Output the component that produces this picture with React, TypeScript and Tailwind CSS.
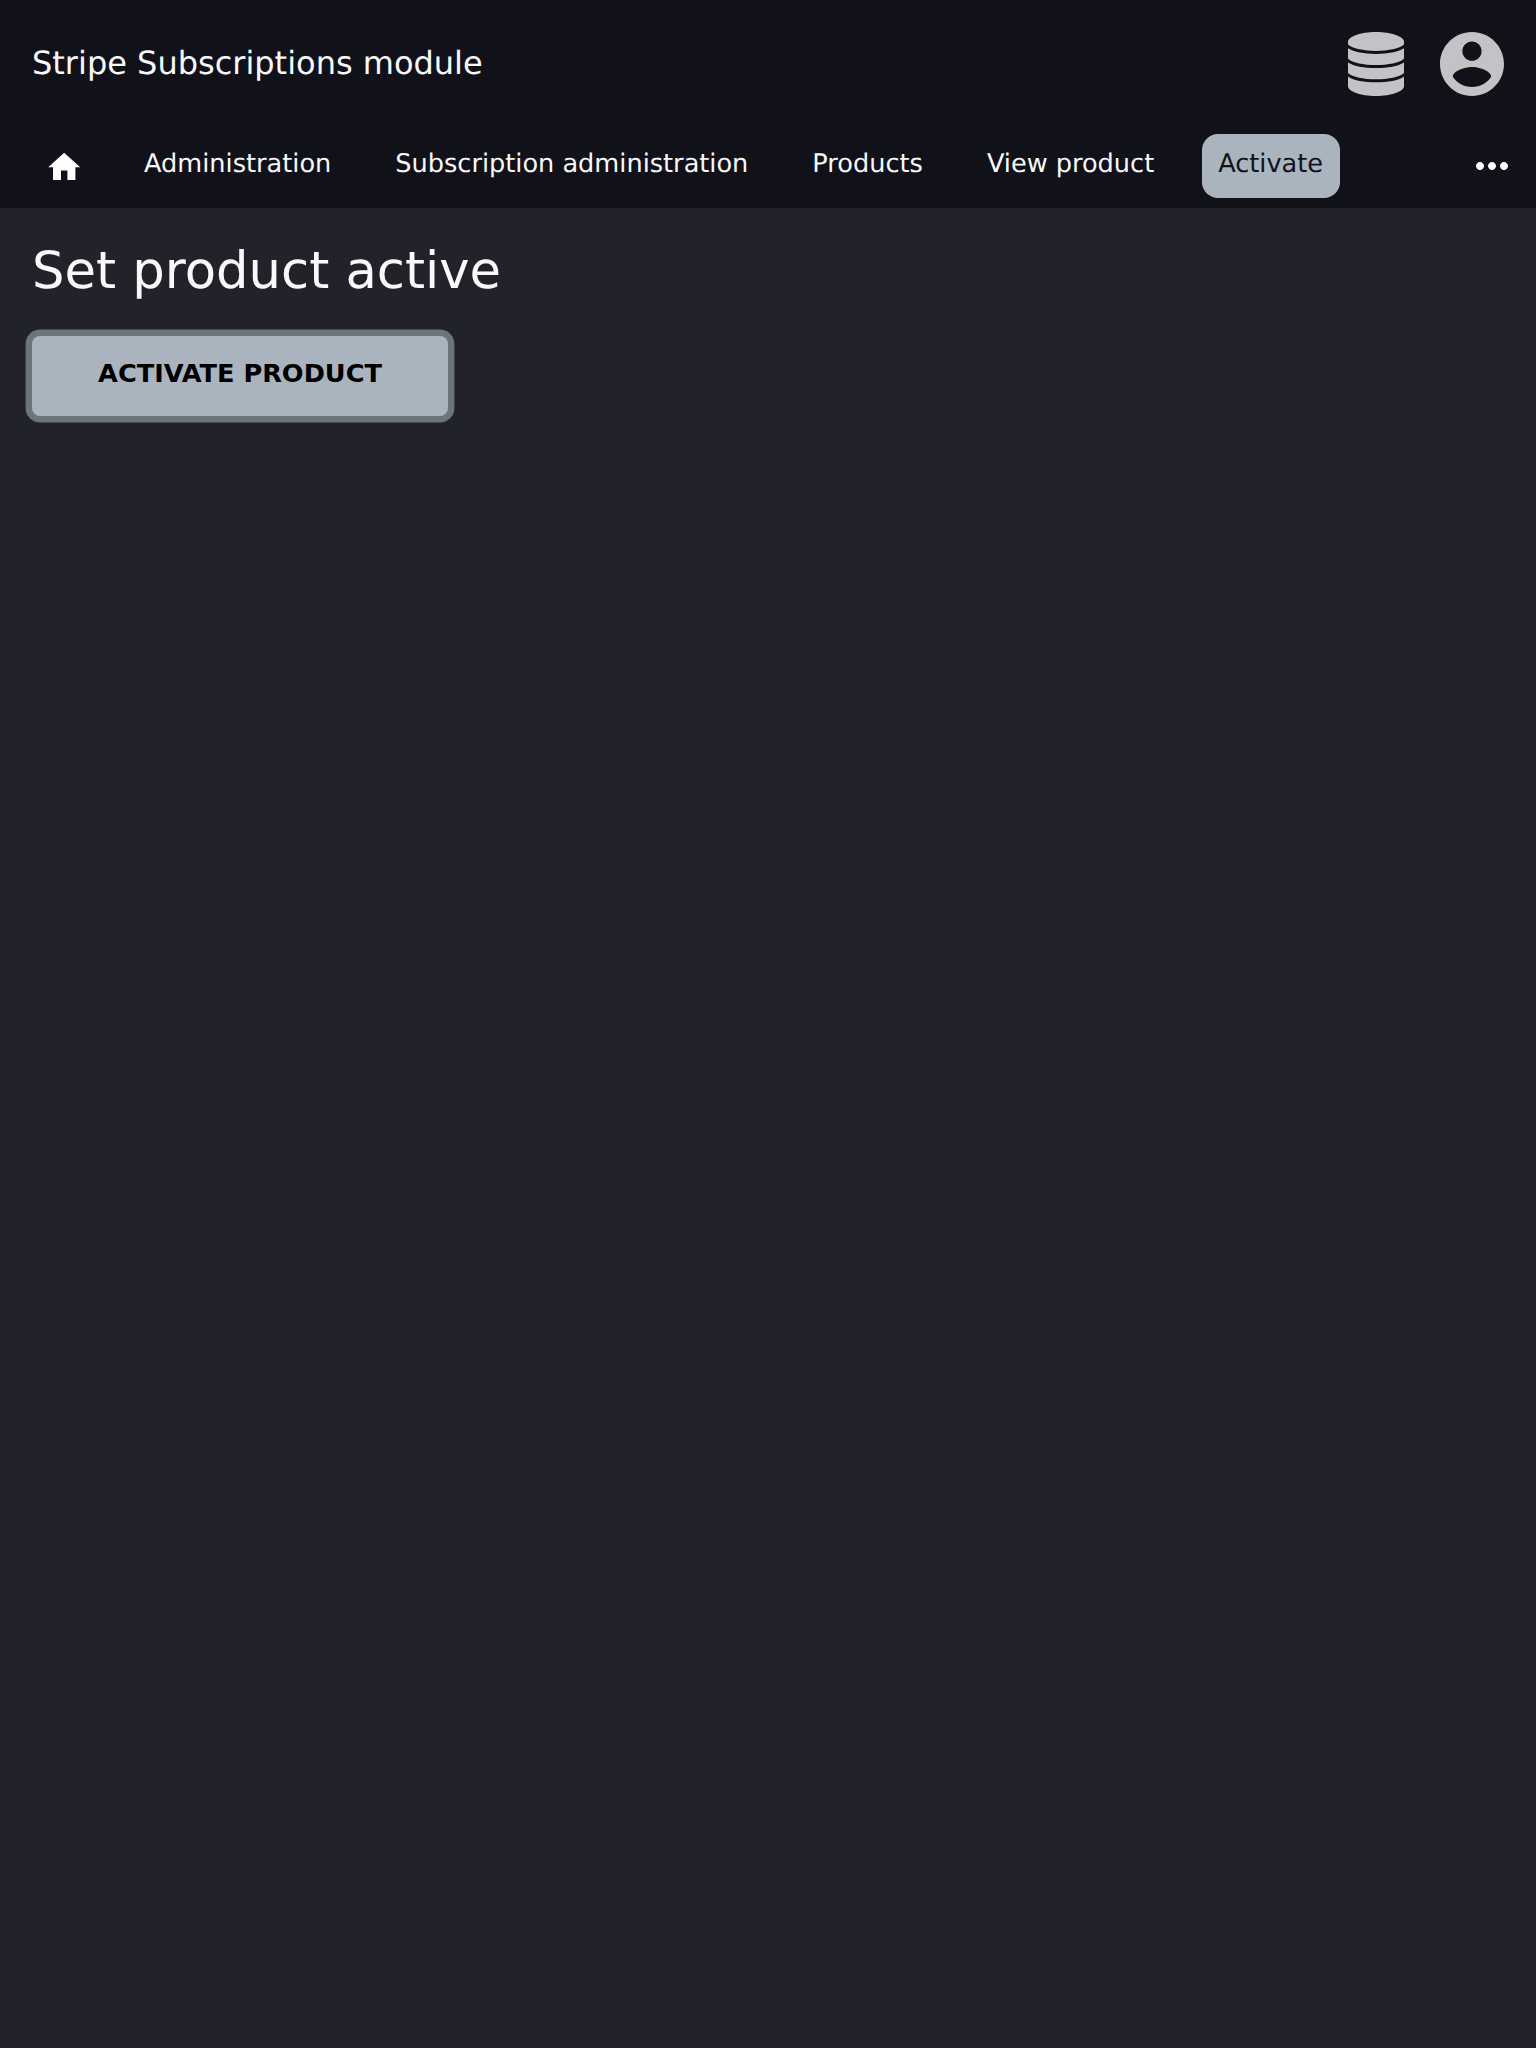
const crumbs = ["Administration", "Subscription administration", "Products", "View product"];

function DatabaseIcon() {
  return (
    <svg className="h-16 w-14" viewBox="0 0 56 64" fill="currentColor">
      <path d="M28 0C43.500 0 56 4.500 56 10v2.600C51.500 16.600 40.500 18.900 28 18.900S4.500 16.600 0 12.600V10C0 4.500 12.500 0 28 0Z" />
      <path d="M0 16.300C6 20 16 21.900 28 21.900s22-1.900 28-5.600v10.500C51.500 30.800 40.500 33.100 28 33.100S4.500 30.800 0 26.800Z" />
      <path d="M0 30.500C6 34.200 16 36.100 28 36.100s22-1.900 28-5.600V41C51.500 45 40.500 47.300 28 47.300S4.500 45 0 41Z" />
      <path d="M0 44.700C6 48.400 16 50.300 28 50.300s22-1.900 28-5.600V54C56 59.500 43.500 64 28 64S0 59.500 0 54Z" />
    </svg>
  );
}

function AccountIcon() {
  return (
    <svg className="size-16" viewBox="2 2 20 20" fill="currentColor">
      <path d="M12 2C6.48 2 2 6.48 2 12s4.48 10 10 10 10-4.48 10-10S17.52 2 12 2zm0 3c1.66 0 3 1.34 3 3s-1.34 3-3 3-3-1.34-3-3 1.34-3 3-3zm0 14.2c-2.5 0-4.71-1.28-6-3.22.03-1.99 4-3.08 6-3.08 1.99 0 5.97 1.09 6 3.08-1.29 1.94-3.5 3.22-6 3.22z" />
    </svg>
  );
}

export default function App() {
  return (
    <div className="min-h-[2048px] w-full bg-[#22222a] font-['DejaVu_Sans',sans-serif] text-[#f8f9fa] [text-rendering:geometricPrecision]">
      <header className="h-[208px] bg-[#11111a]">
        <div className="flex h-32 items-center justify-between px-8">
          <div className="-mt-0.5 text-[32px] leading-[48px]">Stripe Subscriptions module</div>
          <div className="flex items-center gap-9 text-[#c3c3c5]">
            <DatabaseIcon />
            <AccountIcon />
          </div>
        </div>
        <nav className="flex items-start pt-1.5 pl-8 text-[25.6px] leading-[60px]">
          <a className="flex h-16 w-16 items-center justify-center">
            <svg className="mt-0.5 h-[38.4px] w-[38.4px] text-white" viewBox="0 0 24 24" fill="currentColor">
              <path d="M10 20v-6h4v6h5v-8h3L12 3 2 12h3v8z" />
            </svg>
          </a>
          {crumbs.map((label) => (
            <a key={label} className="ml-8 h-16 px-4 whitespace-nowrap">{label}</a>
          ))}
          <a className="ml-8 h-16 w-[138px] rounded-2xl bg-[#a9b4bf] px-4 text-[#11111a]">Activate</a>
          <svg className="mt-2 mr-5 ml-auto size-12 text-white" viewBox="0 0 24 24" fill="currentColor">
            <path d="M6 10c-1.1 0-2 .9-2 2s.9 2 2 2 2-.9 2-2-.9-2-2-2zm12 0c-1.1 0-2 .9-2 2s.9 2 2 2 2-.9 2-2-.9-2-2-2zm-6 0c-1.1 0-2 .9-2 2s.9 2 2 2 2-.9 2-2-.9-2-2-2z" />
          </svg>
        </nav>
      </header>
      <main className="px-8 pt-[30px]">
        <h1 className="text-[51.2px] leading-[66px]">Set product active</h1>
        <button className="mt-8 block h-20 w-[416px] rounded-lg bg-[#a9b4bf] pb-[5px] text-[25.6px] leading-[75px] font-bold text-black ring-[6.4px] ring-[#6c757d]">
          ACTIVATE PRODUCT
        </button>
      </main>
    </div>
  );
}
